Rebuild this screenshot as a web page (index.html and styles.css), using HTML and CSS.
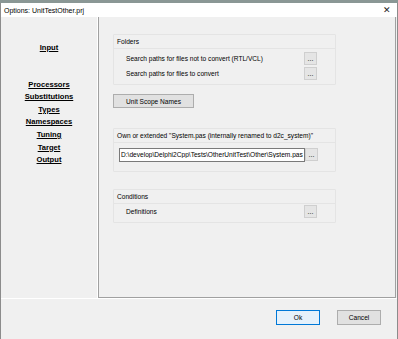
FILE: index.html
```html
<!DOCTYPE html>
<html lang="en">
<head>
  <meta charset="UTF-8">
  <title>Options: UnitTestOther.prj</title>
  <link rel="stylesheet" href="styles.css">
</head>
<body>
  <div class="desktop"></div>
  <div class="window">
    <div class="titlebar">
      <span class="title">Options: UnitTestOther.prj</span>
      <span class="close">&#x2715;</span>
    </div>
    <div class="client">
      <div class="main">
        <div class="nav">
          <a class="nav-item first">Input</a>
          <a class="nav-item">Processors</a>
          <a class="nav-item">Substitutions</a>
          <a class="nav-item">Types</a>
          <a class="nav-item">Namespaces</a>
          <a class="nav-item">Tuning</a>
          <a class="nav-item">Target</a>
          <a class="nav-item">Output</a>
        </div>
        <div class="pane">
          <div class="group folders">
            <div class="group-label">Folders</div>
            <div class="group-body">
              <div class="row">
                <span class="row-text">Search paths for files not to convert (RTL/VCL)</span>
                <button class="dots">...</button>
              </div>
              <div class="row">
                <span class="row-text">Search paths for files to convert</span>
                <button class="dots">...</button>
              </div>
            </div>
          </div>

          <button class="btn scope">Unit Scope Names</button>

          <div class="group system">
            <div class="group-label">Own or extended "System.pas (internally renamed to d2c_system)"</div>
            <div class="group-body">
              <div class="row">
                <input class="edit" type="text" value="D:\develop\Delphi2Cpp\Tests\OtherUnitTest\Other\System.pas">
                <button class="dots">...</button>
              </div>
            </div>
          </div>

          <div class="group conditions">
            <div class="group-label">Conditions</div>
            <div class="group-body">
              <div class="row">
                <span class="row-text">Definitions</span>
                <button class="dots">...</button>
              </div>
            </div>
          </div>
        </div>
      </div>
      <div class="footer">
        <button class="btn ok">Ok</button>
        <button class="btn cancel">Cancel</button>
      </div>
    </div>
  </div>
</body>
</html>
```

FILE: styles.css
```css
body {
  margin: 0;
  width: 398px;
  height: 339px;
  overflow: hidden;
  font-family: "Liberation Sans", Arial, sans-serif;
  font-size: 6.6px;
  color: #000;
  background: #f0f0f0;
}
.desktop {
  height: 3px;
  background: #8a9795;
}
.window {
  height: 336px;
  border-left: 1px solid #8c8c8c;
  border-right: 1px solid #8c8c8c;
  display: flex;
  flex-direction: column;
}
.titlebar {
  height: 14px;
  background: #fff;
  display: flex;
  align-items: center;
  justify-content: space-between;
  padding: 0 6px 0 3px;
}
.title {
  font-size: 7px;
  color: #000;
}
.close {
  font-size: 9px;
  color: #222;
}
.client {
  flex: 1;
  display: flex;
  flex-direction: column;
  background: #f0f0f0;
}
.main {
  height: 281px;
  display: flex;
}
.nav {
  width: 96px;
  display: flex;
  flex-direction: column;
  align-items: center;
  padding-top: 25px;
  border-right: 1px solid #ffffff;
}
.nav-item {
  font-weight: bold;
  font-size: 7.6px;
  text-decoration: underline;
  line-height: 12.6px;
  color: #000;
}
.nav-item.first {
  margin-bottom: 24px;
}
.pane {
  flex: 1;
  border-left: 1px solid #a0a0a0;
  border-bottom: 1px solid #a0a0a0;
  border-right: 1px solid #a0a0a0;
  margin-right: 1px;
  padding: 17px 0 0 14px;
}
.group {
  width: 221px;
  border: 1px solid #e4e4e4;
  border-radius: 1px;
}
.group-label {
  padding: 3px 3px 2px;
  line-height: 8px;
}
.group-body {
  border-top: 1px solid #e4e4e4;
  padding: 2px 0 3px 12px;
}
.row {
  display: flex;
  align-items: center;
  justify-content: space-between;
  height: 15px;
  padding-right: 18px;
}
.dots {
  width: 13px;
  height: 13px;
  padding: 0;
  font-family: inherit;
  font-size: 7px;
  line-height: 9px;
  background: #e5e5e5;
  border: 1px solid #cfcfcf;
}
.btn {
  font-family: inherit;
  font-size: 6.6px;
  background: #e1e1e1;
  border: 1px solid #adadad;
  padding: 0;
}
.scope {
  display: block;
  width: 81px;
  height: 14px;
  margin: 9px 0 0;
}
.system {
  margin-top: 20px;
}
.system .group-body {
  padding: 4px 0 9px 5px;
}
.system .row {
  padding-right: 17px;
}
.edit {
  width: 182px;
  height: 12px;
  padding: 0 1px;
  margin: 0;
  border: 1px solid #7a7a7a;
  background: #fff;
  font-family: inherit;
  font-size: 6.6px;
}
.conditions {
  margin-top: 17px;
}
.conditions .group-body {
  padding: 0 0 3px 12px;
}
.footer {
  flex: 1;
  display: flex;
  justify-content: flex-end;
  align-items: center;
  gap: 17px;
  padding: 0 16px 3px 0;
  border-top: 1px solid #ffffff;
}
.ok,
.cancel {
  width: 44px;
  height: 15px;
}
.ok {
  border-color: #0078d7;
  background: #e5f1fb;
}
```
